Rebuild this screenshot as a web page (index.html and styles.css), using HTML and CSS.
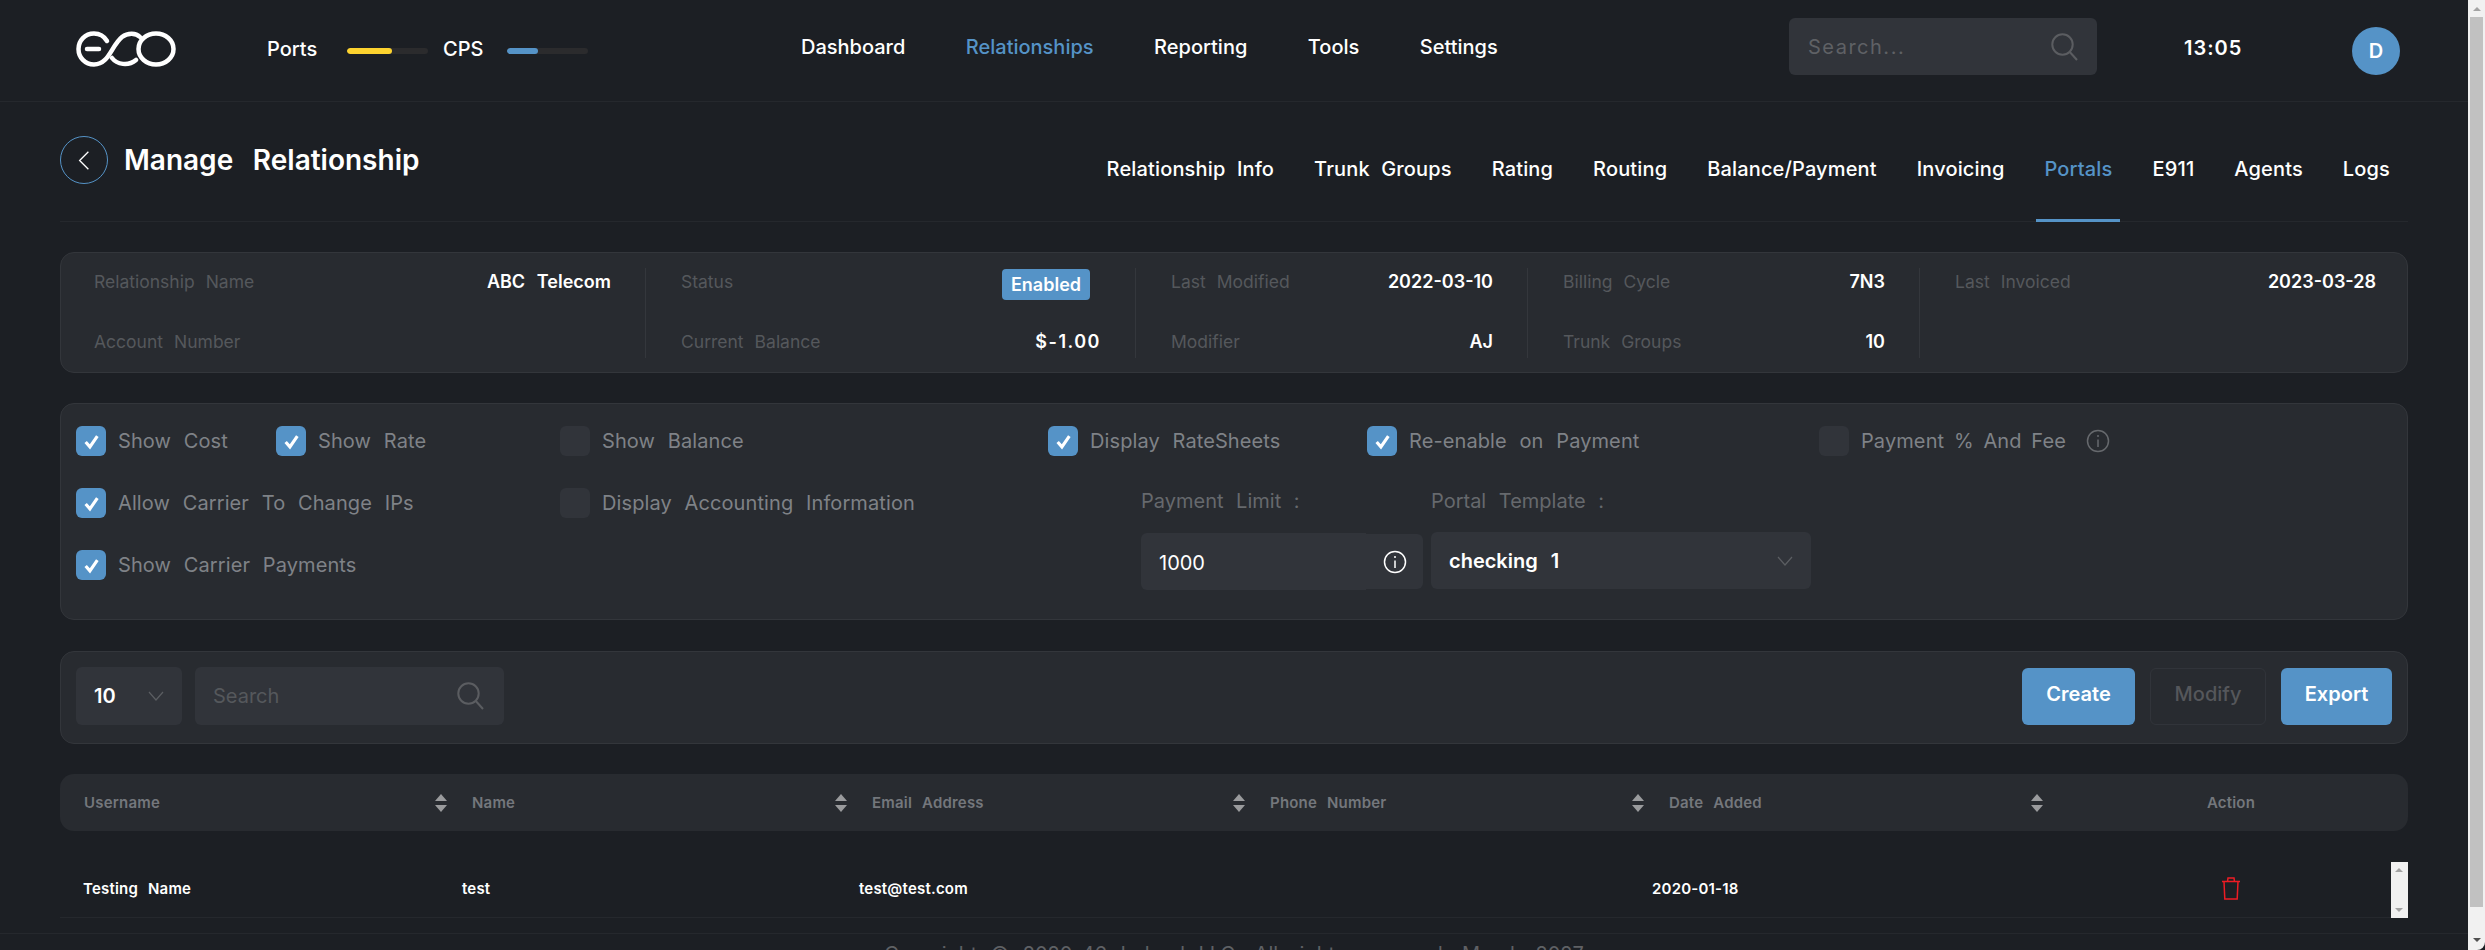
FILE: index.html
```html
<!DOCTYPE html>
<html lang="en">
<head>
<meta charset="utf-8">
<title>Manage Relationship</title>
<link rel="stylesheet" href="styles.css">
</head>
<body>
<div class="app">
  <div class="page">
    <header class="topbar">
      <div class="brand">
        <svg class="logo" viewBox="0 0 100 36" fill="none" stroke="#fff" stroke-width="4.500" stroke-linecap="round">
          <path d="M31 10C28 5 24 2.500 18 2.500C9 2.500 2.500 9.500 2.500 18C2.500 26.500 9 33.500 18 33.500C33 33.500 35 15 46 6C52 1.500 60 2 64 6"/>
          <path d="M11 18H23"/>
          <path d="M36 27C41 33.500 52 35.500 60 29"/>
          <ellipse cx="80" cy="18" rx="17.500" ry="15.500"/>
        </svg>
        <span class="meter-label">Ports</span>
        <span class="meter"><span class="meter-fill yellow"></span></span>
        <span class="meter-label cps">CPS</span>
        <span class="meter"><span class="meter-fill blue"></span></span>
      </div>
      <nav class="mainnav">
        <a>Dashboard</a><a class="active">Relationships</a><a>Reporting</a><a>Tools</a><a>Settings</a>
      </nav>
      <div class="topsearch">
        <span>Search...</span>
        <svg class="search-ico" viewBox="0 0 27 28" fill="none" stroke="#5b5d61" stroke-width="2"><circle cx="11.500" cy="11.500" r="10.200"/><path d="M18.800 19L26 27"/></svg>
      </div>
      <div class="clock">13:05</div>
      <div class="avatar">D</div>
    </header>

    <main class="content">
      <section class="titlerow">
        <div class="titlegroup">
          <span class="backbtn"><svg viewBox="0 0 16 24" fill="none" stroke="#fff" stroke-width="1.500"><path d="M13 2L3 12L13 22"/></svg></span>
          <h1>Manage Relationship</h1>
        </div>
        <nav class="tabs">
          <a>Relationship Info</a><a>Trunk Groups</a><a>Rating</a><a>Routing</a><a>Balance/Payment</a><a>Invoicing</a><a class="active">Portals</a><a>E911</a><a>Agents</a><a>Logs</a>
        </nav>
      </section>

      <section class="card summary">
        <div class="col w3">
          <div class="kv"><span>Relationship Name</span><b>ABC Telecom</b></div>
          <div class="kv"><span>Account Number</span></div>
        </div>
        <div class="col w25">
          <div class="kv"><span>Status</span><em class="badge">Enabled</em></div>
          <div class="kv"><span>Current Balance</span><b class="mono">$-1.00</b></div>
        </div>
        <div class="col w2">
          <div class="kv"><span>Last Modified</span><b>2022-03-10</b></div>
          <div class="kv"><span>Modifier</span><b>AJ</b></div>
        </div>
        <div class="col w2">
          <div class="kv"><span>Billing Cycle</span><b>7N3</b></div>
          <div class="kv"><span>Trunk Groups</span><b>10</b></div>
        </div>
        <div class="col w25 last">
          <div class="kv"><span>Last Invoiced</span><b>2023-03-28</b></div>
        </div>
      </section>

      <section class="card options">
        <label class="check"><i class="box on"><svg viewBox="0 0 16 16" fill="none" stroke="#fff" stroke-width="3"><path d="M2.500 8.500L6.500 13L13.500 3"/></svg></i>Show Cost</label>
        <label class="check"><i class="box on"><svg viewBox="0 0 16 16" fill="none" stroke="#fff" stroke-width="3"><path d="M2.500 8.500L6.500 13L13.500 3"/></svg></i>Show Rate</label>
        <label class="check"><i class="box"></i>Show Balance</label>
        <label class="check"><i class="box on"><svg viewBox="0 0 16 16" fill="none" stroke="#fff" stroke-width="3"><path d="M2.500 8.500L6.500 13L13.500 3"/></svg></i>Display RateSheets</label>
        <label class="check"><i class="box on"><svg viewBox="0 0 16 16" fill="none" stroke="#fff" stroke-width="3"><path d="M2.500 8.500L6.500 13L13.500 3"/></svg></i>Re-enable on Payment</label>
        <label class="check tight"><i class="box"></i>Payment % And Fee<svg class="info dim" viewBox="0 0 24 24" fill="none" stroke="#66696d" stroke-width="1.500"><circle cx="12" cy="12" r="10.500"/><path d="M12 10.500V18M12 6V8"/></svg></label>

        <label class="check r2 c12"><i class="box on"><svg viewBox="0 0 16 16" fill="none" stroke="#fff" stroke-width="3"><path d="M2.500 8.500L6.500 13L13.500 3"/></svg></i>Allow Carrier To Change IPs</label>
        <label class="check r2 c3"><i class="box"></i>Display Accounting Information</label>
        <label class="check r3 c12"><i class="box on"><svg viewBox="0 0 16 16" fill="none" stroke="#fff" stroke-width="3"><path d="M2.500 8.500L6.500 13L13.500 3"/></svg></i>Show Carrier Payments</label>

        <div class="fields">
          <div class="field f-limit">
            <span class="flabel">Payment Limit :</span>
            <div class="limit">
              <span class="limit-input">1000</span>
              <span class="limit-addon"><svg class="info" viewBox="0 0 24 24" fill="none" stroke="#fff" stroke-width="1.500"><circle cx="12" cy="12" r="10.500"/><path d="M12 10.500V18M12 6V8"/></svg></span>
            </div>
          </div>
          <div class="field f-tpl">
            <span class="flabel">Portal Template :</span>
            <div class="select tpl"><b>checking 1</b><svg class="chev" viewBox="0 0 16 10" fill="none" stroke="#5b5e62" stroke-width="1.200"><path d="M1 1L8 9L15 1"/></svg></div>
          </div>
        </div>
      </section>

      <section class="card toolbar">
        <div class="select perpage"><b>10</b><svg class="chev" viewBox="0 0 16 10" fill="none" stroke="#5b5e62" stroke-width="1.200"><path d="M1 1L8 9L15 1"/></svg></div>
        <div class="tsearch"><span>Search</span><svg class="search-ico" viewBox="0 0 27 28" fill="none" stroke="#5b5d61" stroke-width="2"><circle cx="11.500" cy="11.500" r="10.200"/><path d="M18.800 19L26 27"/></svg></div>
        <div class="actions">
          <button class="btn primary create">Create</button>
          <button class="btn ghost">Modify</button>
          <button class="btn primary export">Export</button>
        </div>
      </section>

      <section class="table">
        <div class="thead">
          <div class="th first">Username<i class="sort"></i></div>
          <div class="th">Name<i class="sort"></i></div>
          <div class="th">Email Address<i class="sort"></i></div>
          <div class="th">Phone Number<i class="sort"></i></div>
          <div class="th">Date Added<i class="sort"></i></div>
          <div class="th action">Action</div>
        </div>
        <div class="trow">
          <div class="td first">Testing Name</div>
          <div class="td">test</div>
          <div class="td">test@test.com</div>
          <div class="td"></div>
          <div class="td">2020-01-18</div>
          <div class="td action">
            <svg class="trash" viewBox="0 0 20 23" fill="none" stroke="#ed1c24" stroke-width="1.500"><path d="M1 4.500H19M3 4.500L3.800 22H16.200L17 4.500M6.500 4.500L7 1H13L13.500 4.500"/></svg>
          </div>
          <div class="mini-scroll"><i class="up"></i><i class="down"></i></div>
        </div>
      </section>
    </main>

    <footer class="footer">Copyright © 2020-46 Ireland LLC. All rights reserved. March 2027</footer>
  </div>
  <aside class="scrollbar"><i class="arr up"></i><span class="thumb"></span><i class="arr down"></i></aside>
</div>
</body>
</html>
```

FILE: styles.css
```css
* { box-sizing: border-box; }
html, body { margin: 0; padding: 0; height: 100%; overflow: hidden; background: #1c1f24; }
body { font-family: "Inter", "Liberation Sans", sans-serif; color: #fff; font-size: 20px; word-spacing: 0.3em; }
.app { display: flex; height: 950px; }
.page { flex: 1; min-width: 0; overflow: hidden; }

.topbar { display: grid; grid-template-columns: 801px 988px 308px 87px 59px 109px 48px; height: 102px; border-bottom: 1px solid #25282d; align-items: center; grid-template-areas: "b n s . c . a"; }
.brand { grid-area: b; display: flex; align-items: center; padding-left: 76px; padding-bottom: 4px; }
.logo { width: 100px; height: 36px; margin-right: 91px; }
.meter-label { font-size: 20px; font-weight: 500; width: 80px; }
.meter-label.cps { margin-left: 15px; width: 64px; }
.meter { width: 81px; height: 6px; border-radius: 3px; background: #2b2b2d; margin-top: 4px; overflow: hidden; display: block; }
.meter-fill { display: block; height: 100%; border-radius: 3px; }
.meter-fill.yellow { width: 45px; background: #fdd32f; }
.meter-fill.blue { width: 31px; background: #5593c7; }

.mainnav { grid-area: n; display: flex; gap: 60.500px; font-weight: 500; padding-bottom: 8px; }
.mainnav a.active, .tabs a.active { color: #5593c7; }
.topsearch { grid-area: s; height: 57px; margin-bottom: 8px; background: #31343a; border-radius: 6px; display: flex; align-items: center; justify-content: space-between; padding: 0 19px; color: #5f6165; letter-spacing: 1.500px; }
.search-ico { width: 27px; height: 28px; }
.clock { grid-area: c; font-weight: 600; padding-bottom: 6px; letter-spacing: 1px; white-space: nowrap; }
.avatar { grid-area: a; width: 48px; height: 48px; border-radius: 50%; background: #5593c7; display: flex; align-items: center; justify-content: center; font-weight: 600; }

.content { padding: 0 60px; }
.titlerow { display: flex; justify-content: space-between; height: 120px; border-bottom: 1px solid #25282d; }
.titlegroup { display: flex; align-items: flex-start; padding-top: 34px; gap: 16px; }
.backbtn { width: 48px; height: 48px; border-radius: 50%; border: 1px solid #5593c7; display: flex; align-items: center; justify-content: center; }
.backbtn svg { width: 14px; height: 21px; }
h1 { margin: 0; font-size: 28px; line-height: 48px; font-weight: 600; word-spacing: 0.45em; }
.tabs { display: flex; gap: 24px; padding-top: 55px; margin-right: 10px; font-weight: 500; letter-spacing: 0.150px; }
.tabs a { padding: 0 8px; line-height: 24px; height: 65px; white-space: nowrap; }
.tabs a.active { border-bottom: 3px solid #5593c7; }

.card { background: #282b30; border: 1px solid #33363b; border-radius: 14px; margin-top: 30px; }

.summary { display: flex; padding: 15px 0; height: 121px; }
.col { height: 90px; border-right: 1px solid #34373c; padding: 0 34px 0 35px; display: flex; flex-direction: column; gap: 34px; }
.col.w3 { width: 585px; padding-left: 33px; }
.col.w25 { width: 490px; }
.col.w2 { width: 392px; }
.col.last { flex: 1; border-right: 0; padding-right: 31px; }
.kv { height: 26px; display: flex; align-items: center; justify-content: space-between; font-size: 18px; color: #55585c; word-spacing: 0.4em; }
.kv span { font-size: 17.500px; word-spacing: 0.35em; }
.kv b { color: #fff; font-weight: 600; }
.kv .mono { letter-spacing: 1.500px; }
.badge { align-self: flex-start; margin-top: 1px; margin-right: 11px; width: 88px; height: 31px; background: #5593c7; border-radius: 4px; color: #fff; font-style: normal; font-weight: 600; font-size: 18px; display: flex; align-items: center; justify-content: center; }

.options { height: 217px; padding: 22px 15px 0; display: grid; grid-template-columns: 200px 284px 488px 319px 452px 1fr; grid-template-rows: 30px 30px 30px; row-gap: 32px; position: relative; }
.check { display: flex; align-items: center; gap: 12px; color: #7f8287; font-size: 20px; letter-spacing: 0.100px; white-space: nowrap; word-spacing: 0.35em; }
.check.tight { word-spacing: 0.2em; }
.r2 { grid-row: 2; }
.r3 { grid-row: 3; }
.c12 { grid-column: 1 / 3; }
.c3 { grid-column: 3; }
.box { width: 30px; height: 30px; flex: none; border-radius: 6px; background: #31343a; display: flex; align-items: center; justify-content: center; }
.box.on { background: #5593c7; }
.box svg { width: 17px; height: 17px; }
.info { width: 24px; height: 24px; flex: none; }
.info.dim { margin-left: 8px; }

.fields { grid-row: 2 / 4; grid-column: 4 / 7; display: flex; padding-left: 93px; }
.field { display: flex; flex-direction: column; }
.f-limit { width: 290px; }
.flabel { flex: none; color: #66696d; font-size: 20px; line-height: 26px; margin-bottom: 19px; white-space: nowrap; word-spacing: 0.35em; }
.limit { flex: none; display: flex; align-items: center; }
.limit-input { width: 225px; height: 57px; background: #31343a; border-radius: 6px 0 0 6px; display: flex; align-items: center; padding-left: 18px; padding-top: 2px; font-size: 20px; }
.limit-addon { width: 57px; height: 55px; background: #31343a; border-radius: 0 6px 6px 0; display: flex; align-items: center; justify-content: center; }
.select { background: #31343a; border-radius: 6px; display: flex; align-items: center; justify-content: space-between; font-weight: 600; }
.select b { font-weight: 600; }
.tpl { flex: none; width: 380px; height: 57px; padding: 0 18px; margin-top: -1px; word-spacing: 0.4em; }
.chev { width: 16px; height: 10px; }

.toolbar { height: 93px; margin-top: 31px; display: flex; align-items: center; padding: 0 15px 3px; }
.perpage { width: 106px; height: 58px; padding: 0 18px; }
.tsearch { width: 309px; height: 58px; margin-left: 13px; background: #31343a; border-radius: 6px; display: flex; align-items: center; justify-content: space-between; padding: 0 20px 0 18px; color: #55585c; }
.actions { margin-left: auto; display: flex; gap: 15px; }
.btn { height: 57px; border-radius: 6px; font: 600 20px "Inter", sans-serif; border: 1px solid transparent; color: #fff; padding: 0 0 4px; }
.btn.primary { background: #5593c7; }
.create { width: 113px; }
.export { width: 111px; }
.btn.ghost { width: 116px; background: transparent; border-color: #31343a; color: #55575b; font-weight: 500; }

.table { margin-top: 30px; }
.thead { height: 57px; background: #282b30; border-radius: 14px; display: grid; grid-template-columns: 412px 400px 398px 399px 399px 1fr; align-items: center; }
.th { position: relative; font-size: 15px; font-weight: 600; color: #74777c; word-spacing: 0.4em; letter-spacing: 0.200px; }
.th.first { padding-left: 24px; }
.th.action { text-align: center; padding-right: 14px; }
.sort { position: absolute; right: 25px; top: 50%; margin-top: -9px; width: 12px; height: 18px; }
.sort::before, .sort::after { content: ""; position: absolute; left: 0; border-left: 6px solid transparent; border-right: 6px solid transparent; }
.sort::before { top: 0; border-bottom: 7px solid #9a9b9d; }
.sort::after { bottom: 0; border-top: 7px solid #9a9b9d; }
.trow { position: relative; height: 87px; padding-top: 29px; border-bottom: 1px solid #25282d; display: grid; grid-template-columns: 402px 397px 397px 396px 402px 1fr; align-items: center; }
.td { font-size: 15px; font-weight: 600; color: #fff; word-spacing: 0.4em; letter-spacing: 0.200px; }
.td.first { padding-left: 23px; }
.td.action { text-align: center; }
.trash { width: 20px; height: 23px; display: block; margin: 0 auto; }
.mini-scroll { position: absolute; right: 0; top: 31px; width: 17px; height: 56px; background: #f1f1f1; }
.mini-scroll i { position: absolute; left: 4px; border-left: 4px solid transparent; border-right: 4px solid transparent; }
.mini-scroll .up { top: 6px; border-bottom: 4px solid #a3a3a3; }
.mini-scroll .down { bottom: 6px; border-top: 4px solid #a3a3a3; }

.footer { margin-top: 15px; border-top: 1px solid #25282d; padding-top: 8px; text-align: center; font-size: 20px; word-spacing: 0.4em; color: #5f6165; white-space: nowrap; }

.scrollbar { width: 17px; height: 950px; flex: none; background: #f1f1f1; display: flex; flex-direction: column; align-items: center; border-bottom-right-radius: 8px; }
.thumb { width: 13px; height: 890px; background: #c1c1c1; }
.arr { display: block; border-left: 4px solid transparent; border-right: 4px solid transparent; }
.arr.up { margin: 7px 0 6px; border-bottom: 4px solid #a3a3a3; }
.arr.down { margin-top: 31px; border-top: 4px solid #505050; }
```
